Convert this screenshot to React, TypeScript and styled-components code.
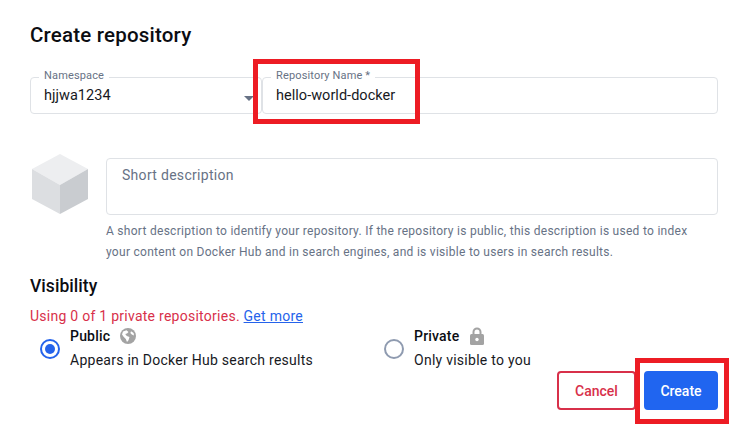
import styled, { createGlobalStyle } from 'styled-components';

const GlobalStyle = createGlobalStyle`
  html, body {
    margin: 0;
    padding: 0;
    background: #fff;
    font-family: Roboto, "Liberation Sans", sans-serif;
    color: #17191e;
  }
`;

const Page = styled.div`
  position: relative;
  width: 740px;
  height: 441px;
  box-sizing: border-box;
  padding: 23px 22px 0 30px;
  overflow: hidden;
`;

const Title = styled.h1`
  margin: 0;
  font-size: 20.5px;
  line-height: 24px;
  font-weight: 500;
  letter-spacing: 0.2px;
  color: #0b0d12;
`;

const FieldRow = styled.div`
  display: flex;
  margin-top: 30px;
`;

const Field = styled.div<{ $width?: number }>`
  position: relative;
  box-sizing: border-box;
  height: 37px;
  display: flex;
  align-items: center;
  justify-content: space-between;
  padding: 0 13px;
  border: 1px solid #dfe2e6;
  border-radius: 4px;
  font-size: 14.5px;
  letter-spacing: 0.03px;
  ${({ $width }) => ($width ? `width: ${$width}px;` : 'flex: 1;')}
`;

const FieldLabel = styled.span`
  position: absolute;
  top: -9px;
  left: 8px;
  padding: 0 5px;
  background: #fff;
  font-size: 11px;
  line-height: 13px;
  letter-spacing: 0.15px;
  color: #677285;
`;

const Caret = styled.span`
  position: absolute;
  right: 7px;
  top: 18px;
  width: 0;
  height: 0;
  border-left: 5px solid transparent;
  border-right: 5px solid transparent;
  border-top: 5px solid #677285;
`;

const DescriptionRow = styled.div`
  display: flex;
  align-items: flex-start;
  gap: 18px;
  margin-top: 40px;
  margin-left: 2px;
`;

const CubeIcon = styled.svg`
  flex: none;
  width: 56px;
  height: 60px;
`;

const DescriptionColumn = styled.div`
  flex: 1;
  margin-top: 4px;
`;

const DescriptionBox = styled.div`
  box-sizing: border-box;
  height: 57px;
  padding: 7px 15px;
  border: 1px solid #dfe2e6;
  border-radius: 4px;
  font-size: 14px;
  line-height: 18px;
  letter-spacing: 0.3px;
  color: #677285;
`;

const HelpText = styled.p`
  margin: 6px 0 0;
  padding-right: 28px;
  font-size: 12px;
  line-height: 21px;
  letter-spacing: 0.28px;
  color: #677285;
`;

const SectionTitle = styled.h2`
  margin: 12px 0 0;
  font-size: 17.5px;
  line-height: 22px;
  font-weight: 500;
  letter-spacing: 0.05px;
  color: #0b0d12;
`;

const Quota = styled.div`
  margin-top: 10px;
  font-size: 14px;
  line-height: 18px;
  letter-spacing: 0.26px;
  color: #d8304a;
`;

const MoreLink = styled.a`
  color: #2563eb;
  text-decoration: underline;
`;

const Options = styled.div`
  display: flex;
  margin-top: 1px;
  padding-left: 10px;
`;

const Option = styled.div<{ $width: number }>`
  display: flex;
  align-items: center;
  gap: 10px;
  width: ${({ $width }) => $width}px;
`;

const Radio = styled.span<{ $checked?: boolean }>`
  flex: none;
  box-sizing: border-box;
  display: flex;
  align-items: center;
  justify-content: center;
  width: 20px;
  height: 20px;
  margin-top: 2px;
  border-radius: 50%;
  border: 2px solid ${({ $checked }) => ($checked ? '#2563eb' : '#8f9bb0')};

  &::after {
    content: '';
    display: ${({ $checked }) => ($checked ? 'block' : 'none')};
    width: 10px;
    height: 10px;
    border-radius: 50%;
    background: #2563eb;
  }
`;

const OptionTitle = styled.div`
  display: flex;
  align-items: center;
  gap: 10px;
  height: 20px;
  font-size: 14px;
  font-weight: 500;
  letter-spacing: 0.2px;
  color: #0b0d12;
`;

const OptionHint = styled.div`
  margin-top: 4px;
  font-size: 14px;
  line-height: 20px;
  letter-spacing: 0.26px;
  color: #17191e;
`;

const Actions = styled.div`
  display: flex;
  justify-content: flex-end;
  gap: 8px;
  margin-top: 1px;
`;

const Button = styled.button<{ $primary?: boolean }>`
  box-sizing: border-box;
  height: 39px;
  border-radius: 4px;
  font-family: inherit;
  font-size: 14px;
  font-weight: 500;
  border: 2px solid ${({ $primary }) => ($primary ? '#2065f0' : '#d8304a')};
  background: ${({ $primary }) => ($primary ? '#2065f0' : '#fff')};
  color: ${({ $primary }) => ($primary ? '#fff' : '#d8304a')};
  width: ${({ $primary }) => ($primary ? 74 : 79)}px;
`;

const Highlight = styled.div<{ $left: number; $top: number; $width: number; $height: number }>`
  position: absolute;
  box-sizing: border-box;
  left: ${({ $left }) => $left}px;
  top: ${({ $top }) => $top}px;
  width: ${({ $width }) => $width}px;
  height: ${({ $height }) => $height}px;
  border: 5px solid #ed1c24;
  pointer-events: none;
`;

const GlobeIcon = () => (
  <svg width="16" height="16" viewBox="0 0 16 16">
    <circle cx="8" cy="8" r="8" fill="#a3a3a3" />
    <path d="M3 3.5 6.5 2.2 8.5 4 7 5.6 5.2 6 6.8 8 9.5 9 8.5 12.2 7 14 5.8 11 3.4 8.6 2 6.5Z" fill="#fff" />
    <path d="M11 3.2 13.6 5 14 7.5 11.8 6.6 10.4 5Z" fill="#fff" />
  </svg>
);

const LockIcon = () => (
  <svg width="15" height="18" viewBox="-1 0 15 18">
    <path d="M3.5 8V5a3.5 3.5 0 0 1 7 0v3" fill="none" stroke="#a3a3a3" strokeWidth="2" />
    <rect x="0" y="7" width="14" height="11" rx="1.5" fill="#a3a3a3" />
    <circle cx="7" cy="12.5" r="1.7" fill="#fff" />
  </svg>
);

export default function App() {
  return (
    <Page>
      <GlobalStyle />
      <Title>Create repository</Title>
      <FieldRow>
        <Field $width={232}>
          <FieldLabel>Namespace</FieldLabel>
          hjjwa1234
          <Caret />
        </Field>
        <Field>
          <FieldLabel>Repository Name *</FieldLabel>
          hello-world-docker
        </Field>
      </FieldRow>
      <DescriptionRow>
        <CubeIcon viewBox="0 0 56 60">
          <path d="M28 0 56 15 28 31 0 15Z" fill="#edeef0" />
          <path d="M0 15 28 31V60L0 45Z" fill="#dcdee1" />
          <path d="M56 15 28 31V60L56 45Z" fill="#c9ccd0" />
        </CubeIcon>
        <DescriptionColumn>
          <DescriptionBox>Short description</DescriptionBox>
          <HelpText>
            A short description to identify your repository. If the repository is public, this description is used to index
            your content on Docker Hub and in search engines, and is visible to users in search results.
          </HelpText>
        </DescriptionColumn>
      </DescriptionRow>
      <SectionTitle>Visibility</SectionTitle>
      <Quota>
        Using 0 of 1 private repositories. <MoreLink href="#">Get more</MoreLink>
      </Quota>
      <Options>
        <Option $width={344}>
          <Radio $checked />
          <div>
            <OptionTitle>
              Public
              <GlobeIcon />
            </OptionTitle>
            <OptionHint>Appears in Docker Hub search results</OptionHint>
          </div>
        </Option>
        <Option $width={200}>
          <Radio />
          <div>
            <OptionTitle>
              Private
              <LockIcon />
            </OptionTitle>
            <OptionHint>Only visible to you</OptionHint>
          </div>
        </Option>
      </Options>
      <Actions>
        <Button>Cancel</Button>
        <Button $primary>Create</Button>
      </Actions>
      <Highlight $left={253} $top={59} $width={167} $height={65} />
      <Highlight $left={635} $top={358} $width={94} $height={66} />
    </Page>
  );
}
